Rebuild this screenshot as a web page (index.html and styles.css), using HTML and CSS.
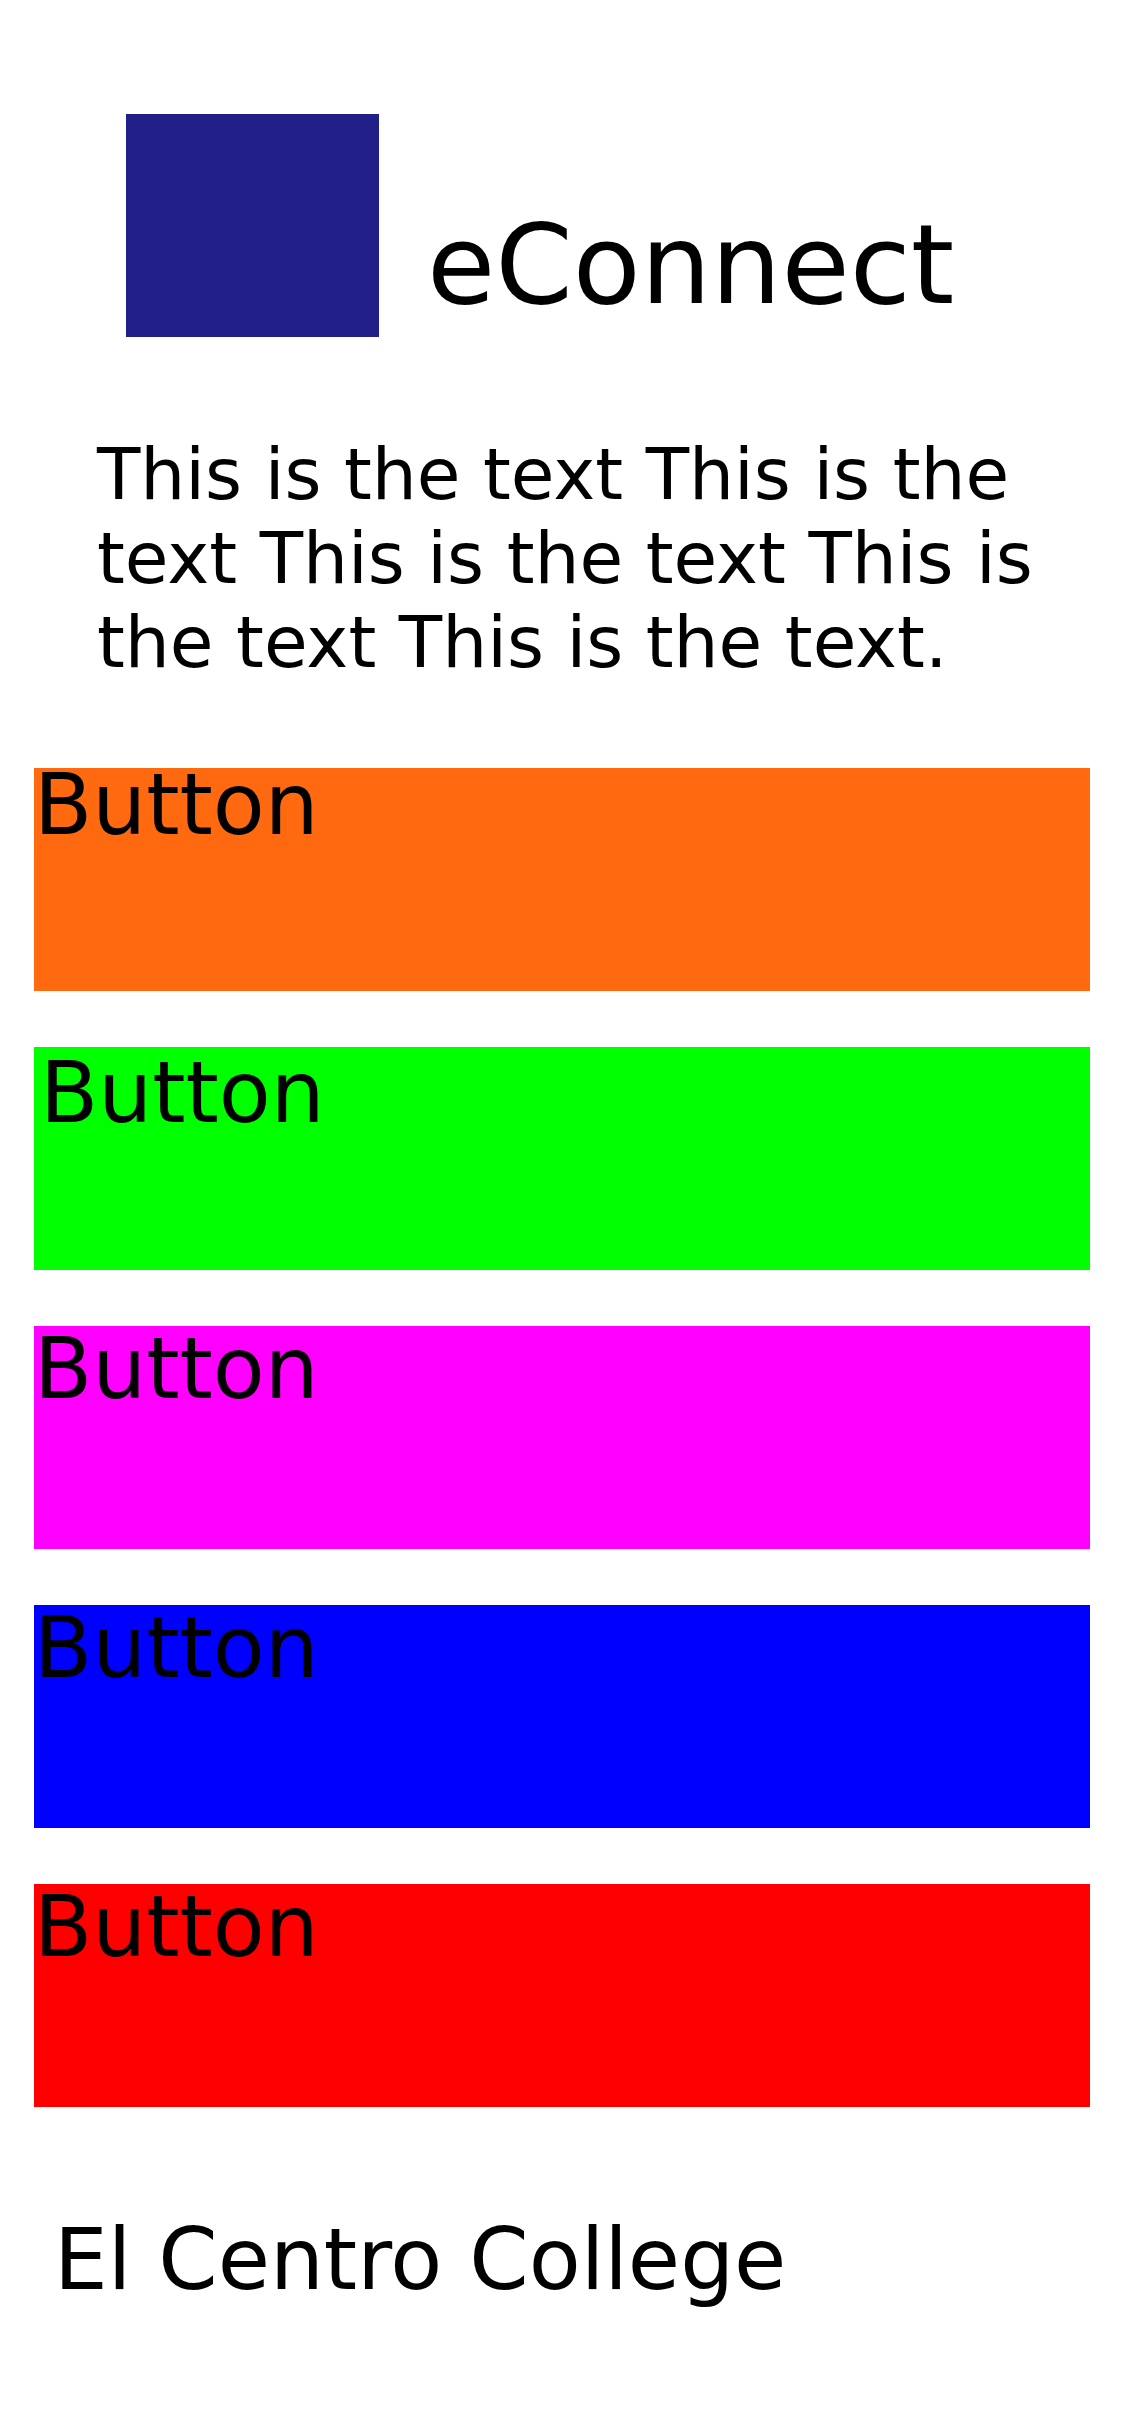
FILE: index.html
```html
<!DOCTYPE html>
<html lang="en">
<head>
<meta charset="utf-8">
<title>eConnect</title>
<link rel="stylesheet" href="styles.css">
</head>
<body>
<div class="page">
  <header class="header">
    <div class="logo"></div>
    <h1 class="title">eConnect</h1>
  </header>
  <p class="intro">This is the text This is the text This is the text This is the text This is the text.</p>
  <div class="buttons">
    <div class="btn btn-orange"><span class="label">Button</span></div>
    <div class="btn btn-green"><span class="label">Button</span></div>
    <div class="btn btn-magenta"><span class="label">Button</span></div>
    <div class="btn btn-blue"><span class="label">Button</span></div>
    <div class="btn btn-red"><span class="label">Button</span></div>
  </div>
  <footer class="footer">El Centro College</footer>
</div>
</body>
</html>
```

FILE: styles.css
```css
html, body {
  margin: 0;
  padding: 0;
  background: #ffffff;
}

.page {
  font-family: "DejaVu Sans", Verdana, sans-serif;
  color: #000000;
  width: 1125px;
}

.header {
  display: flex;
  align-items: flex-start;
  padding: 114px 0 0 126px;
  gap: 48px;
}

.logo {
  width: 253px;
  height: 223px;
  background: #212088;
  flex: none;
}

.title {
  margin: 86px 0 0 0;
  font-size: 111px;
  font-weight: normal;
  line-height: normal;
}

.intro {
  margin: 96px 35px 0 97px;
  font-size: 71px;
  line-height: 84px;
}

.buttons {
  display: flex;
  flex-direction: column;
  gap: 56px;
  margin: 83px 35px 0 34px;
}

.btn {
  height: 223px;
  font-size: 85px;
  line-height: 1;
}

.label {
  display: block;
}

.btn-orange { background: #ff6a11; }
.btn-orange .label { margin-top: -6px; }

.btn-green { background: #00ff00; }
.btn-green .label { padding: 3px 0 0 6px; }

.btn-magenta { background: #ff00ff; }
.btn-blue { background: #0000ff; }
.btn-red { background: #ff0000; }

.footer {
  margin-top: 103px;
  padding-left: 54px;
  font-size: 85px;
  line-height: normal;
}
```
